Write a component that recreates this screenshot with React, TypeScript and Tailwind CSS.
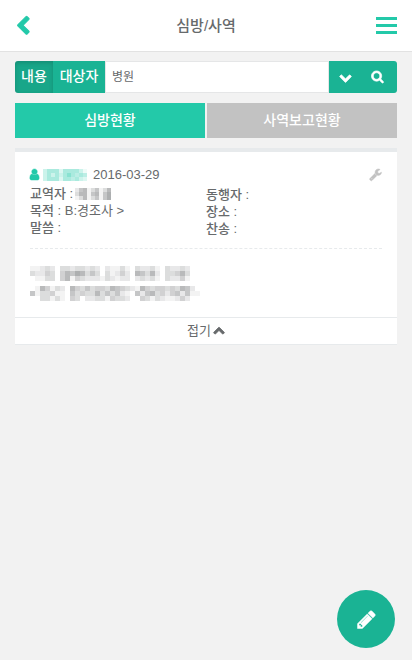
import React, { useState } from 'react';

interface IconProps {
  d: string;
  size: number;
  weight?: number;
  className?: string;
}

const ICONS = {
  chevronLeft: 'M1427 301l-531 531 531 531q19 19 19 45t-19 45l-166 166q-19 19-45 19t-45-19l-742-742q-19-19-19-45t19-45l742-742q19-19 45-19t45 19l166 166q19 19 19 45t-19 45z',
  chevronDown: 'M1683 808l-742 741q-19 19-45 19t-45-19l-742-741q-19-19-19-45.5t19-45.5l166-165q19-19 45-19t45 19l531 531 531-531q19-19 45-19t45 19l166 165q19 19 19 45.5t-19 45.5z',
  chevronUp: 'M1683 1331l-166 165q-19 19-45 19t-45-19l-531-531-531 531q-19 19-45 19t-45-19l-166-165q-19-19-19-45.5t19-45.5l742-741q19-19 45-19t45 19l742 741q19 19 19 45.5t-19 45.5z',
  search: 'M1216 832q0-185-131.5-316.5t-316.5-131.5-316.5 131.5-131.5 316.5 131.5 316.5 316.5 131.5 316.5-131.5 131.5-316.5zm512 832q0 52-38 90t-90 38q-54 0-90-38l-343-342q-179 124-399 124-143 0-273.5-55.5t-225-150-150-225-55.5-273.5 55.5-273.5 150-225 225-150 273.5-55.5 273.5 55.5 225 150 150 225 55.5 273.5q0 220-124 399l343 343q37 37 37 90z',
  user: 'M1536 1399q0 109-62.5 187t-150.5 78h-854q-88 0-150.5-78t-62.5-187q0-85 8.5-160.5t31.5-152 58.5-131 94-89 134.5-34.5q131 128 313 128t313-128q76 0 134.5 34.5t94 89 58.5 131 31.5 152 8.5 160.5zm-256-887q0 159-112.5 271.5t-271.5 112.5-271.5-112.5-112.5-271.5 112.5-271.5 271.5-112.5 271.5 112.5 112.5 271.5z',
  wrench: 'M448 1472q0-26-19-45t-45-19-45 19-19 45 19 45 45 19 45-19 19-45zm644-420l-682 682q-37 37-90 37-52 0-91-37l-106-108q-38-36-38-90 0-53 38-91l681-681q39 98 114.5 173.5t173.5 114.5zm634-435q0 39-23 106-47 134-164.5 217.5t-258.5 83.5q-185 0-316.5-131.5t-131.5-316.5 131.5-316.5 316.5-131.5q58 0 121.5 16.5t107.5 46.5q16 11 16 28t-16 28l-293 169v224l193 107q5-3 79-48.5t135.5-81 70.5-35.5q15 0 23.5 10t8.5 25z',
  pencil: 'M491 1536l91-91-235-235-91 91v107h128v128h107zm523-928q0-22-22-22-10 0-17 7l-542 542q-7 7-7 17 0 22 22 22 10 0 17-7l542-542q7-7 7-17zm-54-192l416 416-832 832h-416v-416zm683 96q0 53-37 90l-166 166-416-416 166-165q36-38 90-38 53 0 91 38l235 234q37 39 37 91z',
};

const Icon: React.FC<IconProps> = ({ d, size, weight = 0, className }) => (
  <svg
    width={size}
    height={size}
    viewBox="0 0 1792 1792"
    fill="currentColor"
    stroke="currentColor"
    strokeWidth={weight}
    overflow="visible"
    className={className}
    aria-hidden="true"
  >
    <path d={d} />
  </svg>
);

interface MosaicProps {
  rows: string[];
  cell: number;
  className?: string;
}

// Pixelated block over private text, one digit per cell (0 = clear, 9 = darkest)
const Mosaic: React.FC<MosaicProps> = ({ rows, cell, className }) => (
  <svg
    width={rows[0].length * cell}
    height={rows.length * cell}
    fill="currentColor"
    shapeRendering="crispEdges"
    className={className}
    aria-hidden="true"
  >
    {rows.map((row, y) =>
      row.split('').map((v, x) => (
        <rect key={`${x}-${y}`} x={x * cell} y={y * cell} width={cell} height={cell} opacity={Number(v) / 13} />
      ))
    )}
  </svg>
);

const NAME = ['35552555531', '35353575454', '35552554532'];
const PASTOR = ['256135136', '366156157', '136135157'];
const LINE_1 = [
  '1123203323323202113103223103223200',
  '3224304657635303124206536203346300',
  '0113304614322213212202323103224100',
];
const LINE_2 = [
  '0164132064353443654321643443436520',
  '5133411053433635352105256342452511',
  '0033131043022331433200431321124200',
];

export default function App() {
  const [target, setTarget] = useState('content');
  const [tab, setTab] = useState('visit');
  const [keyword, setKeyword] = useState('병원');
  const [open, setOpen] = useState(true);

  const targetClass = (name: string) =>
    target === name ? 'bg-[#18a689] shadow-[inset_0_2px_4px_rgba(0,0,0,0.15)]' : 'bg-[#1ab394]';
  const tabClass = (name: string) => (tab === name ? 'bg-[#23c9a9]' : 'bg-[#c2c2c2]');

  return (
    <div className="min-h-screen bg-[#f2f2f2] text-[13px] leading-[17px] text-[#676a6c] font-['Liberation_Sans','Noto_Sans_CJK_KR',sans-serif]">
      <header className="flex h-[52px] items-center justify-between border-b border-[#e2e2e2] bg-white px-[15px]">
        <button type="button" aria-label="뒤로" className="w-[21px] text-[#23c9a9]">
          <Icon d={ICONS.chevronLeft} size={20} weight={90} className="-ml-0.5" />
        </button>
        <h1 className="text-[15px] font-medium">심방/사역</h1>
        <button type="button" aria-label="메뉴" className="flex w-[21px] flex-col gap-1 text-[#23c9a9]">
          <span className="h-[3px] w-full bg-current" />
          <span className="h-[3px] w-full bg-current" />
          <span className="h-[3px] w-full bg-current" />
        </button>
      </header>

      <main className="px-[15px] pt-[9px]">
        <form className="flex h-8" onSubmit={(e) => e.preventDefault()}>
          <button
            type="button"
            onClick={() => setTarget('content')}
            className={`w-[38px] rounded-l-[3px] pb-0.5 text-sm font-medium text-white ${targetClass('content')}`}
          >
            내용
          </button>
          <button
            type="button"
            onClick={() => setTarget('person')}
            className={`w-[52px] pb-0.5 text-sm font-medium text-white ${targetClass('person')}`}
          >
            대상자
          </button>
          <input
            type="text"
            aria-label="검색어"
            value={keyword}
            onChange={(e) => setKeyword(e.target.value)}
            className="min-w-0 flex-1 border border-[#e5e6e7] bg-white px-1.5 text-xs outline-none"
          />
          <button type="button" aria-label="상세 검색" className="flex w-[33px] items-center justify-center bg-[#1ab394] text-white">
            <Icon d={ICONS.chevronDown} size={13} weight={90} />
          </button>
          <button type="submit" aria-label="검색" className="flex w-[35px] items-center justify-center rounded-r-[3px] bg-[#1ab394] pr-1 pb-0.5 text-white">
            <Icon d={ICONS.search} size={13} weight={90} />
          </button>
        </form>

        <nav className="mt-2.5 grid grid-cols-2 gap-0.5">
          <button type="button" onClick={() => setTab('visit')} className={`h-[35px] pb-0.5 text-sm font-medium text-white ${tabClass('visit')}`}>
            심방현황
          </button>
          <button type="button" onClick={() => setTab('report')} className={`h-[35px] pb-0.5 text-sm font-medium text-white ${tabClass('report')}`}>
            사역보고현황
          </button>
        </nav>

        <article className="mt-2.5 border-t-4 border-[#e7eaec] bg-white">
          <div className="px-[15px] pt-3.5">
            <div className="flex items-center">
              <Icon d={ICONS.user} size={13} weight={60} className="-ml-0.5 text-[#23c9a9]" />
              <Mosaic rows={NAME} cell={4} className="ml-0.5 text-[#23c9a9]" />
              <time dateTime="2016-03-29" className="ml-1.5">2016-03-29</time>
              <button type="button" aria-label="수정" className="ml-auto text-[#c2c2c2]">
                <Icon d={ICONS.wrench} size={13} weight={60} />
              </button>
            </div>

            <div className="mt-0.5 grid grid-cols-2">
              <div>
                <p className="flex items-center">
                  <span className="font-medium">교역자 :</span>
                  <Mosaic rows={PASTOR} cell={4} className="ml-0.5" />
                </p>
                <p><span className="font-medium">목적</span> : B:경조사 &gt;</p>
                <p className="font-medium">말씀 :</p>
              </div>
              <div className="pt-px font-medium">
                <p>동행자 :</p>
                <p>장소 :</p>
                <p>찬송 :</p>
              </div>
            </div>

            <hr className="mt-[11px] border-dashed border-[#e7eaec]" />

            {open && (
              <div className="flex flex-col gap-[5px] pt-[17px] pb-4">
                <Mosaic rows={LINE_1} cell={5} />
                <Mosaic rows={LINE_2} cell={5} />
              </div>
            )}
          </div>

          <button
            type="button"
            onClick={() => setOpen(!open)}
            className="flex h-7 w-full items-center justify-center gap-0.5 border-y border-[#e7eaec] pb-0.5"
          >
            {open ? '접기' : '펼치기'}
            <Icon d={open ? ICONS.chevronUp : ICONS.chevronDown} size={12} weight={110} />
          </button>
        </article>
      </main>

      <button
        type="button"
        aria-label="글쓰기"
        className="fixed right-[17px] bottom-3 flex size-[58px] items-center justify-center rounded-full bg-[#1ab394] text-white"
      >
        <Icon d={ICONS.pencil} size={21} weight={40} />
      </button>
    </div>
  );
}
